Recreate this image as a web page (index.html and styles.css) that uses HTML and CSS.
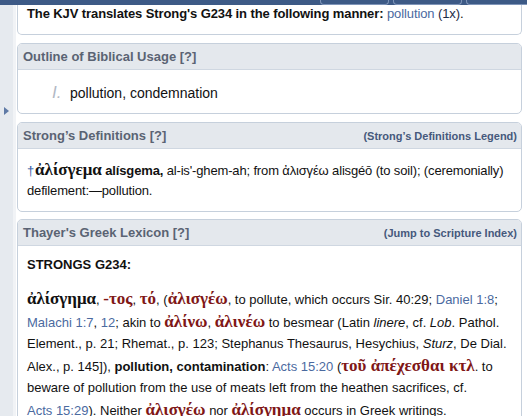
FILE: index.html
```html
<!DOCTYPE html>
<html lang="en">
<head>
<meta charset="utf-8">
<title>Lexicon :: G234</title>
<link rel="stylesheet" href="styles.css">
</head>
<body>
<div class="topbar">
  <span class="tab"></span><span class="tab"></span><span class="tab tab-last"></span>
</div>
<div class="layout">
  <aside class="strip">
    <span class="arrow"></span>
    <span class="handle"></span>
  </aside>
  <main class="content">
    <section class="panel panel-first">
      <div class="panel-body kjv">
        <b>The KJV translates Strong's G234 in the following manner:</b> <a class="link">pollution</a> <span class="count">(1x)</span>.
      </div>
    </section>

    <section class="panel">
      <header class="panel-head"><span class="head-title">Outline of Biblical Usage [?]</span></header>
      <div class="panel-body outline">
        <span class="numeral">I.</span><span>pollution, condemnation</span>
      </div>
    </section>

    <section class="panel">
      <header class="panel-head"><span class="head-title">Strong’s Definitions [?]</span><span class="head-link">(Strong’s Definitions Legend)</span></header>
      <div class="panel-body strongs">
        <span class="dagger">†</span><span class="gk-big">ἀλίσγεμα</span> <b>alísgema,</b> al-is'-ghem-ah; from ἀλισγέω alisgéō (to soil); (ceremonially) defilement:—pollution.
      </div>
    </section>

    <section class="panel panel-last">
      <header class="panel-head"><span class="head-title">Thayer's Greek Lexicon [?]</span><span class="head-link">(Jump to Scripture Index)</span></header>
      <div class="panel-body thayer">
        <p class="entry-id">STRONGS G234:</p>
        <p class="entry"><span class="gk gk-head">ἀλίσγημα</span>, <span class="gk">-τος</span>, <span class="gk">τό</span>, (<span class="gk">ἀλισγέω</span>, to pollute, which occurs Sir. 40:29; <a class="link">Daniel 1:8</a>; <a class="link">Malachi 1:7</a>, <a class="link">12</a>; akin to <span class="gk">ἀλίνω</span>, <span class="gk">ἀλινέω</span> to besmear (Latin <i>linere</i>, cf. <i>Lob</i>. Pathol. Element., p. 21; Rhemat., p. 123; Stephanus Thesaurus, Hesychius, <i>Sturz</i>, De Dial. Alex., p. 145]), <b>pollution, contamination</b>: <a class="link">Acts 15:20</a> (<span class="gk">τοῦ ἀπέχεσθαι κτλ</span>. to beware of pollution from the use of meats left from the heathen sacrifices, cf. <a class="link">Acts 15:29</a>). Neither <span class="gk">ἀλισγέω</span> nor <span class="gk">ἀλίσγημα</span> occurs in Greek writings.</p>
      </div>
    </section>
  </main>
</div>
</body>
</html>
```
FILE: styles.css
```css
* { box-sizing: border-box; }
html, body { margin: 0; padding: 0; }
body {
  width: 527px;
  height: 416px;
  overflow: hidden;
  background: #ffffff;
  font-family: "Liberation Sans", Arial, sans-serif;
  font-size: 13px;
  color: #111111;
}
.topbar {
  height: 5px;
  background: #3d5a86;
  display: flex;
  justify-content: flex-end;
  align-items: flex-end;
  gap: 4px;
}
.tab {
  width: 69px;
  height: 5px;
  border: 1px solid #7f95b9;
  border-top: none;
  border-radius: 0 0 4px 4px;
}
.tab-last { width: 61px; border-right: none; border-radius: 0 0 0 4px; }
.layout {
  display: flex;
  align-items: stretch;
  height: 411px;
}
.strip {
  width: 16px;
  flex: none;
  background: #e6eaef;
  border-right: 3px solid #f1f3f6;
  display: flex;
  align-items: flex-start;
  padding-top: 92px;
}
.arrow {
  margin-top: 10px;
  margin-left: 4px;
  width: 0; height: 0;
  border-top: 4px solid transparent;
  border-bottom: 4px solid transparent;
  border-left: 5px solid #5f7aa6;
}
.handle {
  margin-left: 4px;
  width: 1px;
  height: 21px;
  background: #7a8597;
}
.content {
  flex: 1;
  min-width: 0;
  padding: 0 5px 0 1px;
  display: flex;
  flex-direction: column;
  gap: 8px;
}
.panel {
  border: 1px solid #c6d0dc;
  border-radius: 5px;
  background: #ffffff;
  flex: none;
}
.panel-first {
  border-top: none;
  border-radius: 0 0 5px 5px;
}
.panel-last { margin-top: -1px; }
.panel-head {
  height: 26px;
  background: #e4e8ed;
  border-bottom: 1px solid #cfd7e1;
  border-radius: 4px 4px 0 0;
  display: flex;
  align-items: center;
  justify-content: space-between;
  padding: 0 4px 0 5px;
}
.head-title {
  font-weight: bold;
  color: #5a6373;
  font-size: 13px;
}
.head-link {
  font-weight: bold;
  font-size: 11px;
  color: #46597c;
}
.panel-body { padding: 0 9px; }
.kjv {
  height: 29px;
  line-height: 18px;
  letter-spacing: -0.1px;
}
.link { color: #4b6a9f; text-decoration: none; white-space: nowrap; }
.count { color: #1d2b46; }
.outline {
  height: 43px;
  display: flex;
  align-items: center;
  padding-left: 34px;
  padding-top: 2px;
  font-size: 14px;
}
.numeral {
  font-style: italic;
  font-size: 17px;
  color: #b2b9c5;
  width: 18px;
}
.strongs {
  height: 62px;
  line-height: 20px;
  padding-top: 11px;
  letter-spacing: -0.15px;
}
.dagger { color: #3b62a8; }
.gk-big {
  font-family: "Liberation Serif", "DejaVu Serif", serif;
  font-weight: bold;
  font-size: 17px;
  color: #111111;
  margin-left: 1px;
  letter-spacing: 0;
}
.thayer { padding-top: 9px; padding-bottom: 8px; }
.entry-id {
  margin: 0;
  font-weight: bold;
  line-height: 20px;
}
.entry {
  margin: 13px 0 0;
  line-height: 21.5px;
}
.gk {
  font-family: "Liberation Serif", "DejaVu Serif", serif;
  font-weight: bold;
  font-size: 17px;
  color: #7f1717;
}
.gk-head { color: #111111; }
```
